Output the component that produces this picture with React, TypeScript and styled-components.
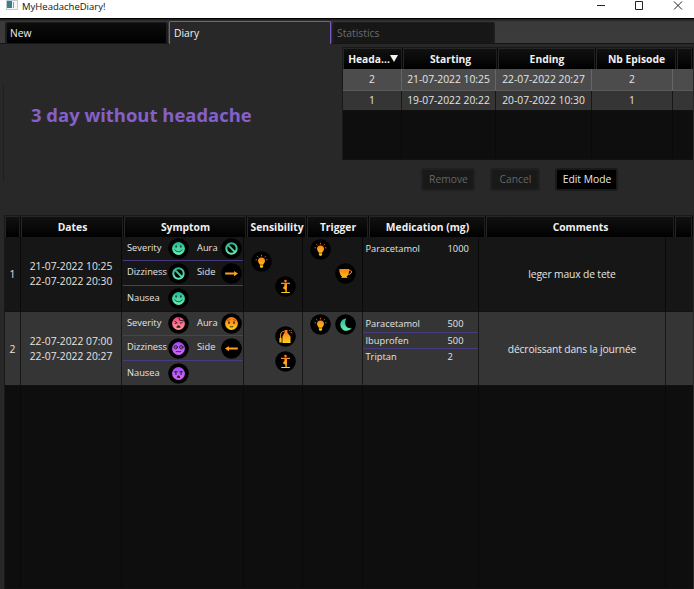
import React from "react";
import styled, { createGlobalStyle, css } from "styled-components";

const GlobalStyle = createGlobalStyle`
  * { box-sizing: border-box; }
  html, body { margin: 0; height: 100%; overflow: hidden; background: #282828; }
  body { font-family: "Open Sans", "Noto Sans", sans-serif; font-size: 10.3px; color: #e4e4e4; white-space: nowrap; }
`;

const Window = styled.div`
  width: 694px;
  height: 589px;
  display: flex;
  flex-direction: column;
  overflow: hidden;
  background: #282828;
`;

/* ---------- title bar ---------- */
const TitleBar = styled.header`
  height: 18px;
  flex: none;
  display: flex;
  align-items: flex-start;
  background: #fff;
  color: #111;
`;
const AppIcon = styled.svg`
  width: 12px;
  height: 10px;
  margin: 0 4px 0 6px;
`;
const WindowTitle = styled.span`
  flex: 1;
  font-size: 9.5px;
  line-height: 13px;
`;
const WindowButtons = styled.svg`
  width: 104px;
  height: 12px;
`;

/* ---------- tabs ---------- */
const TabBar = styled.nav`
  height: 26px;
  flex: none;
  display: flex;
  gap: 1px;
  padding: 3px 0 0 5px;
  border-top: 1px solid #000;
  border-bottom: 1px solid #151515;
  background: linear-gradient(#1c1c1c, #3a3a3a 3px, #3b3b3b);
`;
const Tab = styled.button<{ $state: "normal" | "active" | "disabled" }>`
  width: 163px;
  height: 21px;
  padding: 0 3px;
  text-align: left;
  font: inherit;
  font-size: 10.3px;
  line-height: 20px;
  border: 1px solid #1d1d1d;
  border-width: 1px 2px 0;
  border-radius: 2px 2px 0 0;
  ${({ $state }) =>
    $state === "active"
      ? css`
          width: 162px;
          height: 23px;
          margin-top: -1px;
          line-height: 22px;
          border: 1px solid #7a57bd;
          border-bottom: 0;
          background: #282828;
          color: #f0f0f0;
          padding-left: 4px;
        `
      : $state === "disabled"
        ? css`
            background: #171717;
            color: #6c6c6c;
          `
        : css`
            background: linear-gradient(#0c0c0c, #000);
            color: #f0f0f0;
          `}
`;

/* ---------- upper area ---------- */
const Upper = styled.section`
  height: 171px;
  flex: none;
  display: flex;
  justify-content: space-between;
  padding-right: 1px;
`;
const Summary = styled.div`
  display: flex;
  height: 98px;
  margin: 40px 0 0 3px;
  padding: 18px 0 0 27px;
  border-left: 1px solid #1f1f1f;
`;
const Headline = styled.h1`
  margin: 0;
  font-size: 18.45px;
  line-height: 26px;
  font-weight: 700;
  color: #8560c8;
`;
const Episodes = styled.div`
  width: 351px;
  padding-top: 3px;
`;
const Buttons = styled.div`
  display: flex;
  gap: 15px;
  padding: 8px 0 0 79px;
`;
const Button = styled.button<{ $width: number }>`
  width: ${({ $width }) => $width}px;
  height: 23px;
  padding: 0 0 2px 1px;
  font: inherit;
  line-height: 17px;
  border: 2px solid #1a1a1a;
  border-radius: 3px;
  background: #000;
  color: #e8e8e8;
  &:enabled { padding-bottom: 0; }
  &:disabled {
    padding-bottom: 0;
    border-color: #202020;
    background: #191919;
    color: #656565;
  }
`;

/* ---------- tables ---------- */
const Table = styled.div<{ $height: number }>`
  height: ${({ $height }) => $height}px;
  display: flex;
  flex-direction: column;
  border: solid #191919;
  border-width: 1px 0 0 1px;
  background: #0e0e0e;
`;
const HeaderRow = styled.div<{ $columns: string; $height: number }>`
  display: grid;
  grid-template-columns: ${({ $columns }) => $columns};
  height: ${({ $height }) => $height}px;
  flex: none;
  background: #080808;
`;
const HeaderCell = styled.div`
  display: flex;
  align-items: flex-start;
  justify-content: center;
  min-width: 0;
  padding-left: 1px;
  border: 1px solid #262626;
  border-right-color: #1f1f1f;
  border-bottom: 0;
  margin-right: 1px;
  background: linear-gradient(#111, #000);
  font-weight: 700;
  line-height: 20px;
  color: #f0f0f0;
`;
const SortArrow = styled.svg`
  width: 8px;
  height: 8px;
  margin-top: 5px;
`;
const BodyRow = styled.div<{ $columns: string; $height?: number; $tone: "dark" | "light" | "selected" | "empty" }>`
  display: grid;
  grid-template-columns: ${({ $columns }) => $columns};
  ${({ $height }) => ($height ? css`height: ${$height}px; flex: none;` : css`flex: 1;`)}
  background: ${({ $tone }) =>
    ({ dark: "#161616", light: "#353535", selected: "#4c4c4c", empty: "#0e0e0e" })[$tone]};
  border-bottom: ${({ $tone }) => ($tone === "selected" ? "1px solid #5a5a5a" : "1px solid #111")};
  --rule: ${({ $tone }) => ($tone === "selected" ? "#666" : $tone === "light" ? "#171717" : "#090909")};
`;
const Cell = styled.div`
  display: flex;
  flex-direction: column;
  align-items: center;
  justify-content: center;
  min-width: 0;
  line-height: 15px;
  border-right: 1px solid var(--rule);
  &:last-child { border-right: 0; }
`;
const Comment = styled.span`
  letter-spacing: -0.14px;
`;

/* ---------- diary cells ---------- */
const Diary = styled.section`
  margin: 0 1px 0 4px;
  height: 374px;
`;
const Symptoms = styled.div`
  align-self: stretch;
  display: grid;
  grid-template-rows: 24px 25px 25px;
  margin: 0 1px;
  height: 74px;
`;
const SymptomLine = styled.div`
  display: grid;
  grid-template-columns: 41px 29px 24px 22px;
  align-items: center;
  padding-left: 4px;
  font-size: 9.3px;
  border-bottom: 1px solid #473a80;
  &:last-child { border-bottom: 0; }
`;
const Label = styled.span`
  line-height: 14px;
  margin-top: -2px;
`;
const IconGrid = styled.div<{ $rows: number }>`
  display: grid;
  grid-template-columns: 25px 24px;
  grid-template-rows: repeat(${({ $rows }) => $rows}, 24.6px);
  place-items: center;
  width: 49px;
  height: 74px;
  align-content: ${({ $rows }) => ($rows === 2 ? "center" : "start")};
`;
const Slot = styled.span`
  display: block;
  width: 21px;
  height: 21px;
`;
const Badge = styled.svg`
  display: block;
  width: 21px;
  height: 21px;
`;
const Medications = styled.div`
  align-self: stretch;
  display: grid;
  grid-template-rows: 17px 16px 17px;
  height: 74px;
  padding-top: 4px;
`;
const MedicationLine = styled.div`
  display: grid;
  grid-template-columns: 82px 1fr;
  padding-left: 2.5px;
  font-size: 9.3px;
  line-height: 16px;
  border-bottom: 1px solid #473a80;
  &:only-child, &:last-child { border-bottom: 0; }
`;

type IconName =
  | "smile" | "none" | "right" | "left" | "hurt" | "worried"
  | "dizzy" | "sad" | "bulb" | "pose" | "cup" | "perfume" | "moon";

const paint: Record<IconName, string> = {
  smile: "teal", none: "teal", moon: "teal", hurt: "pink", worried: "amber",
  dizzy: "violet", sad: "violet", right: "amber", left: "amber",
  bulb: "amber", pose: "amber", cup: "amber", perfume: "amber",
};

const Gradients = () => (
  <svg width="0" height="0">
    <defs>
      {[
        ["teal", "#22b594", "#6df0b4"],
        ["pink", "#ff3f80", "#ff9f93"],
        ["amber", "#ff7016", "#ffd21c"],
        ["violet", "#9a4cf7", "#e068ff"],
      ].map(([id, from, to]) => (
        <linearGradient key={id} id={id} gradientUnits="userSpaceOnUse" x1="0" y1="4" x2="0" y2="17">
          <stop offset="0" stopColor={from} />
          <stop offset="1" stopColor={to} />
        </linearGradient>
      ))}
    </defs>
  </svg>
);

const Face = ({ fill, children }: { fill: string; children: React.ReactNode }) => (
  <>
    <circle cx="10.5" cy="10.5" r="6.4" fill={fill} />
    <g stroke="#222" strokeWidth=".9" fill="none" strokeLinecap="round">{children}</g>
  </>
);

const Icon = ({ name }: { name: IconName }) => {
  const f = `url(#${paint[name]})`;
  const art: Record<IconName, React.ReactNode> = {
    smile: (
      <Face fill={f}>
        <path d="M8.1 7.9v1.2M12.9 7.9v1.2" strokeWidth="1.3" />
        <path d="M7 11.9c1.3 2.5 5.7 2.5 7 0" />
      </Face>
    ),
    none: (
      <g stroke={f} strokeWidth="2" fill="none">
        <circle cx="10.5" cy="10.5" r="5.2" />
        <path d="M6.9 6.9l7.2 7.2" />
      </g>
    ),
    right: <path fill={f} d="M4.2 9.6h8.9V7.9l3.9 2.7-3.9 2.7v-1.7H4.2z" />,
    left: <path fill={f} d="M16.8 9.6H7.9V7.9L4 10.6l3.9 2.7v-1.7h8.9z" />,
    hurt: (
      <Face fill={f}>
        <path d="M11 4.6l.4 2.6 4.2.6M6.8 8.4l2.2 1.3M7.2 10.5l1.5-.5M12.3 10.2l1.8-.6" />
        <path d="M8.9 14c.4-1.8 2.8-1.8 3.2 0z" fill="#222" />
      </Face>
    ),
    worried: (
      <Face fill={f}>
        <path d="M8 8.9v1.4M13 8.9v1.4" strokeWidth="1.4" />
        <path d="M6.7 7.3l1.4-.5M14.3 7.3l-1.4-.5" strokeWidth=".6" />
        <path d="M9.2 13.8h2.6" />
      </Face>
    ),
    dizzy: (
      <Face fill={f}>
        <circle cx="7.7" cy="9.2" r="1.7" />
        <circle cx="13.3" cy="9.2" r="1.7" />
        <path d="M7.7 9.2h.1M13.3 9.2h.1M8.2 13.7h4.6" />
      </Face>
    ),
    sad: (
      <Face fill={f}>
        <path d="M6.5 8.7h2.7M14.5 8.7h-2.7" />
        <path d="M7.9 9v2.4M13.1 9v2.4" strokeWidth="1.1" />
        <path d="M9.2 14.2c.2-1.9 2.4-1.9 2.6 0z" fill="#222" />
      </Face>
    ),
    bulb: (
      <g fill={f}>
        <path d="M10.5 6.6a3.5 3.5 0 0 0-3.5 3.5c0 1.7 1.4 2.3 1.8 3.7h3.4c.4-1.4 1.8-2 1.8-3.7a3.5 3.5 0 0 0-3.5-3.5zM8.9 14.3h3.2v1.5l-.8 1H9.7l-.8-1z" />
        <path d="M6.3 5.2l1 1.1M14.7 5.2l-1 1.1M4.6 8.8h1.3M16.4 8.8h-1.3" stroke={f} strokeWidth=".8" />
        <rect x="10.1" y="3.8" width=".8" height="1.6" />
      </g>
    ),
    pose: (
      <g fill={f}>
        <circle cx="10.5" cy="5.1" r="1.3" />
        <path d="M6 6.7h9v1.3h-3v3.2l-.3 4.9h-1.3v-2.3L8 12.3l.4-1.2 1-.9V8H6zM6.3 16h8.6v1H6.3z" />
      </g>
    ),
    cup: (
      <g>
        <path fill={f} d="M4.3 6h10c0 3.7-.8 6.4-3 8H7.3c-2.2-1.6-3-4.3-3-8z" />
        <path fill="none" stroke={f} d="M14.2 7.4c3.5-.8 2.9 3.9-.8 4.1" />
        <path fill={f} d="M6.3 14.1h6v.8h-6z" />
      </g>
    ),
    perfume: (
      <g fill={f}>
        <path d="M9.5 4h3v3.3h-3zM9.1 7.3h3.8l2.6 3.1v6.6H7.4v-6.5z" />
        <path d="M9.5 5.6C6.1 5 5.3 7.4 5.5 12.6" fill="none" stroke={f} />
        <path d="M4.4 12h2.3v4.4H4.4zM13.6 4.8l1.6-.8v1.4zM15.7 4.4l1.4-.8v1.2zM15.2 6.6l2 .9V6.2z" />
      </g>
    ),
    moon: <path fill={f} d="M11.4 4.4a6.2 6.2 0 1 0 5.3 9.6c-5.1 1.6-8.5-4.4-5.3-9.6z" />,
  };
  return (
    <Badge viewBox="0 0 21 21" aria-hidden="true">
      <circle cx="10.5" cy="10.5" r="10.3" fill="#000" />
      {art[name]}
    </Badge>
  );
};

/* ---------- data ---------- */
const episodeHeader = "60px 95px 98px 81px 16px";
const episodeBody = "59px 94px 96px 81px 1fr";
const diaryHeader = "16px 103px 123px 60px 62px 117px 189px 18px";
const diaryBody = "16px 101px 122px 59px 60px 116px 187px 1fr";

const episodes = [
  ["2", "21-07-2022 10:25", "22-07-2022 20:27", "2", ""],
  ["1", "19-07-2022 20:22", "20-07-2022 10:30", "1", ""],
];

interface Entry {
  dates: string[];
  symptoms: [string, IconName, string?, IconName?][];
  sensibility: (IconName | null)[];
  trigger: (IconName | null)[];
  medication: [string, string][];
  comment: string;
}
const entries: Entry[] = [
  {
    dates: ["21-07-2022 10:25", "22-07-2022 20:30"],
    symptoms: [["Severity", "smile", "Aura", "none"], ["Dizziness", "none", "Side", "right"], ["Nausea", "smile"]],
    sensibility: ["bulb", null, null, "pose"],
    trigger: ["bulb", null, null, "cup", null, null],
    medication: [["Paracetamol", "1000"]],
    comment: "leger maux de tete",
  },
  {
    dates: ["22-07-2022 07:00", "22-07-2022 20:27"],
    symptoms: [["Severity", "hurt", "Aura", "worried"], ["Dizziness", "dizzy", "Side", "left"], ["Nausea", "sad"]],
    sensibility: [null, "perfume", null, "pose"],
    trigger: ["bulb", "moon", null, null, null, null],
    medication: [["Paracetamol", "500"], ["Ibuprofen", "500"], ["Triptan", "2"]],
    comment: "décroissant dans la journée",
  },
];

const Icons = ({ names }: { names: (IconName | null)[] }) => (
  <IconGrid $rows={names.length / 2}>
    {names.map((n, i) => (n ? <Icon key={i} name={n} /> : <Slot key={i} />))}
  </IconGrid>
);

export default function App() {
  return (
    <Window>
      <GlobalStyle />
      <TitleBar>
        <AppIcon viewBox="0 0 12 10">
          <path d="M0 0h12v10H0z" fill="#c4ccd2" />
          <path d="M1 1h10v8H1z" fill="#f4f6f7" />
          <path d="M1 1h5v7H1z" fill="#38818c" />
          <path d="M7 2h1v6H7z" fill="#74a2ba" />
        </AppIcon>
        <WindowTitle>MyHeadacheDiary!</WindowTitle>
        <WindowButtons viewBox="0 0 104 12" fill="none" stroke="#222">
          <path d="M7 5.5h8M45.5 1.5h7v8h-7zM84 1.5l8 8M92 1.5l-8 8" />
        </WindowButtons>
      </TitleBar>
      <TabBar>
        <Tab $state="normal">New</Tab>
        <Tab $state="active">Diary</Tab>
        <Tab $state="disabled" disabled>Statistics</Tab>
      </TabBar>
      <Upper>
        <Summary>
          <Headline>3 day without headache</Headline>
        </Summary>
        <Episodes>
          <Table $height={113}>
            <HeaderRow $columns={episodeHeader} $height={21}>
              <HeaderCell>
                Heada...
                <SortArrow viewBox="0 0 8 8"><path d="M0 1h8L4 8z" fill="#f4f4f4" /></SortArrow>
              </HeaderCell>
              <HeaderCell>Starting</HeaderCell>
              <HeaderCell>Ending</HeaderCell>
              <HeaderCell>Nb Episode</HeaderCell>
              <HeaderCell />
            </HeaderRow>
            {episodes.map((row, i) => (
              <BodyRow key={i} $columns={episodeBody} $height={i === 0 ? 22 : 20} $tone={i === 0 ? "selected" : "light"}>
                {row.map((text, j) => <Cell key={j}>{text}</Cell>)}
              </BodyRow>
            ))}
            <BodyRow $columns={episodeBody} $tone="empty">
              {episodes[0].map((_, j) => <Cell key={j} />)}
            </BodyRow>
          </Table>
          <Buttons>
            <Button $width={54} disabled>Remove</Button>
            <Button $width={50} disabled>Cancel</Button>
            <Button $width={63}>Edit Mode</Button>
          </Buttons>
        </Episodes>
      </Upper>
      <Diary>
        <Table $height={374}>
          <HeaderRow $columns={diaryHeader} $height={21}>
            {["", "Dates", "Symptom", "Sensibility", "Trigger", "Medication (mg)", "Comments", ""].map((h, i) => (
              <HeaderCell key={i}>{h}</HeaderCell>
            ))}
          </HeaderRow>
          {entries.map((e, i) => (
            <BodyRow key={i} $columns={diaryBody} $height={i === 0 ? 75 : 74} $tone={i === 0 ? "dark" : "light"}>
              <Cell>{i + 1}</Cell>
              <Cell>{e.dates.map((d) => <span key={d}>{d}</span>)}</Cell>
              <Cell>
                <Symptoms>
                  {e.symptoms.map(([a, ai, b, bi]) => (
                    <SymptomLine key={a}>
                      <Label>{a}</Label>
                      <Icon name={ai} />
                      {b && <Label>{b}</Label>}
                      {bi && <Icon name={bi} />}
                    </SymptomLine>
                  ))}
                </Symptoms>
              </Cell>
              <Cell><Icons names={e.sensibility} /></Cell>
              <Cell><Icons names={e.trigger} /></Cell>
              <Cell>
                <Medications>
                  {e.medication.map(([name, dose]) => (
                    <MedicationLine key={name}>
                      <span>{name}</span>
                      <span>{dose}</span>
                    </MedicationLine>
                  ))}
                </Medications>
              </Cell>
              <Cell><Comment>{e.comment}</Comment></Cell>
              <Cell />
            </BodyRow>
          ))}
          <BodyRow $columns={diaryBody} $tone="empty">
            {diaryBody.split(" ").map((_, j) => <Cell key={j} />)}
          </BodyRow>
        </Table>
      </Diary>
      <Gradients />
    </Window>
  );
}
